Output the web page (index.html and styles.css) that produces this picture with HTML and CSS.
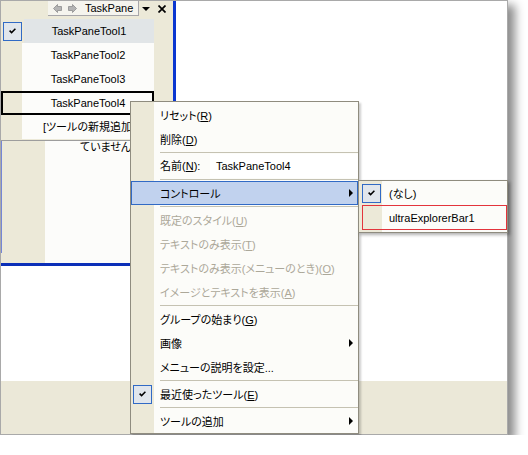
FILE: index.html
```html
<!DOCTYPE html>
<html lang="ja">
<head>
<meta charset="utf-8">
<title>TaskPane</title>
<link rel="stylesheet" href="styles.css">
</head>
<body>
<div class="window">
  <div class="main">
    <div class="panel">
      <div class="toolbar">
        <div class="tb-nav">
          <svg class="nav-arrow" width="9" height="9" viewBox="0 0 9 9"><polygon points="0.5,4.5 4.5,0.5 4.5,2.5 8.5,2.5 8.5,6.5 4.5,6.5 4.5,8.5" fill="#b4b4b4" stroke="#8e8e8e" stroke-width="0.8"/></svg>
          <svg class="nav-arrow second" width="9" height="9" viewBox="0 0 9 9"><polygon points="8.5,4.5 4.5,0.5 4.5,2.5 0.5,2.5 0.5,6.5 4.5,6.5 4.5,8.5" fill="#b4b4b4" stroke="#8e8e8e" stroke-width="0.8"/></svg>
          <span class="tb-title">TaskPane</span>
        </div>
        <div class="tb-drop"><span class="tri-down"></span></div>
        <div class="tb-close"><svg width="8" height="8" viewBox="0 0 8 8"><path d="M0.5 0.5 L7.5 7.5 M7.5 0.5 L0.5 7.5" stroke="#000" stroke-width="1.7"/></svg></div>
      </div>
      <div class="panel-body">
        <div class="list">
          <div class="row selected">
            <div class="gutter"><span class="cbox"><svg width="7" height="6" viewBox="0 0 7 6"><polyline points="0.6,2.6 2.6,4.6 6.4,0.8" fill="none" stroke="#000" stroke-width="1.5"/></svg></span></div>
            <div class="label">TaskPaneTool1</div>
          </div>
          <div class="row"><div class="gutter"></div><div class="label">TaskPaneTool2</div></div>
          <div class="row"><div class="gutter"></div><div class="label">TaskPaneTool3</div></div>
          <div class="row focused"><div class="gutter"></div><div class="label">TaskPaneTool4</div></div>
          <div class="row add"><div class="gutter"></div><div class="label">[ツールの新規追加</div></div>
          <div class="empty">
            <div class="egutter"><span class="bline"></span></div>
            <div class="etext">ていません。</div>
          </div>
        </div>
      </div>
    </div>
  </div>
  <div class="status"></div>

  <div class="menu">
    <div class="mi"><span class="ic"></span><span class="tx">リセット(<u>R</u>)</span></div>
    <div class="mi"><span class="ic"></span><span class="tx">削除(<u>D</u>)</span></div>
    <div class="sep"></div>
    <div class="mi name"><span class="ic"></span><span class="tx">名前(<u>N</u>):</span><span class="field">TaskPaneTool4</span></div>
    <div class="sep"></div>
    <div class="mi hot"><span class="ic"></span><span class="tx">コントロール</span><span class="arr"></span></div>
    <div class="sep"></div>
    <div class="mi dis"><span class="ic"></span><span class="tx">既定のスタイル(<u>U</u>)</span></div>
    <div class="mi dis"><span class="ic"></span><span class="tx">テキストのみ表示(<u>T</u>)</span></div>
    <div class="mi dis"><span class="ic"></span><span class="tx">テキストのみ表示(メニューのとき)(<u>O</u>)</span></div>
    <div class="mi dis"><span class="ic"></span><span class="tx">イメージとテキストを表示(<u>A</u>)</span></div>
    <div class="sep"></div>
    <div class="mi"><span class="ic"></span><span class="tx">グループの始まり(<u>G</u>)</span></div>
    <div class="mi"><span class="ic"></span><span class="tx">画像</span><span class="arr"></span></div>
    <div class="mi"><span class="ic"></span><span class="tx">メニューの説明を設定...</span></div>
    <div class="sep"></div>
    <div class="mi"><span class="ic"><span class="cbox"><svg width="7" height="6" viewBox="0 0 7 6"><polyline points="0.6,2.6 2.6,4.6 6.4,0.8" fill="none" stroke="#000" stroke-width="1.5"/></svg></span></span><span class="tx">最近使ったツール(<u>E</u>)</span></div>
    <div class="sep"></div>
    <div class="mi"><span class="ic"></span><span class="tx">ツールの追加</span><span class="arr"></span></div>
  </div>

  <div class="submenu">
    <div class="smi"><span class="sic"><span class="cbox"><svg width="7" height="6" viewBox="0 0 7 6"><polyline points="0.6,2.6 2.6,4.6 6.4,0.8" fill="none" stroke="#000" stroke-width="1.5"/></svg></span></span><span class="stx">(なし)</span></div>
    <div class="smi picked"><span class="sic"></span><span class="stx">ultraExplorerBar1</span></div>
  </div>
</div>
</body>
</html>
```

FILE: styles.css
```css
html, body {
  margin: 0;
  padding: 0;
  background: #ffffff;
}

body {
  font-family: "Liberation Sans", "Noto Sans CJK JP", sans-serif;
  font-size: 11px;
  font-feature-settings: "palt";
  color: #000;
}

u {
  text-decoration: underline;
  text-underline-offset: 1px;
}

.window {
  position: relative;
  width: 506px;
  height: 433px;
  border: 1px solid #a9a9a9;
  background: #ffffff;
  display: flex;
  flex-direction: column;
  box-shadow: 6px 6px 9px 1px rgba(0, 0, 0, 0.45);
}

.main {
  height: 380px;
  display: flex;
  align-items: flex-start;
}

.panel {
  width: 172px;
  height: 262px;
  background: #ece9d8;
  border-right: 3px solid #0a36d0;
  border-bottom: 3px solid #0b2fb8;
  display: flex;
  flex-direction: column;
}

/* toolbar */
.toolbar {
  height: 15px;
  display: flex;
  align-items: stretch;
}

.tb-nav {
  margin-left: 47px;
  width: 91px;
  background: #f5f4ee;
  border-right: 1px solid #a7a6aa;
  border-bottom: 1px solid #a7a6aa;
  display: flex;
  align-items: center;
  padding-left: 5px;
  box-sizing: border-box;
}

.nav-arrow.second {
  margin-left: 6px;
}

.tb-title {
  margin-left: 8px;
  line-height: 14px;
  white-space: nowrap;
}

.tb-drop {
  width: 13px;
  display: flex;
  align-items: center;
  justify-content: center;
}

.tri-down {
  width: 0;
  height: 0;
  border-top: 4px solid #000;
  border-left: 4px solid transparent;
  border-right: 4px solid transparent;
}

.tb-close {
  margin-left: 6px;
  display: flex;
  align-items: center;
}

/* list */
.panel-body {
  flex: 1;
  display: flex;
  padding-top: 3px;
}

.list {
  width: 153px;
  display: flex;
  flex-direction: column;
}

.row {
  height: 24px;
  display: flex;
  background: #fcfcfa;
}

.row .gutter {
  width: 21px;
  background: #ece9d8;
  display: flex;
  align-items: center;
}

.row .label {
  flex: 1;
  line-height: 24px;
  text-align: center;
  white-space: nowrap;
  overflow: hidden;
}

.row.selected .label {
  background: #e1e5e7;
}

.row.selected .gutter {
  padding-left: 2px;
}

.row.focused {
  outline: 2px solid #000;
  outline-offset: -2px;
}

.row.add .label {
  text-align: left;
  padding-left: 21px;
}

.cbox {
  width: 17px;
  height: 17px;
  border: 1px solid #316ac5;
  background: #e1e6ec;
  display: flex;
  align-items: center;
  justify-content: center;
}

.empty {
  margin-top: 1px;
  border-top: 1px solid #9d9d9d;
  flex: 1;
  display: flex;
}

.egutter {
  width: 44px;
  background: #ece9d8;
  display: flex;
  align-items: flex-start;
}

.bline {
  width: 1px;
  height: 112px;
  background: #7586d6;
}

.etext {
  flex: 1;
  background: #fcfcfa;
  padding-left: 35px;
  white-space: nowrap;
  line-height: 13px;
}

.status {
  height: 53px;
  background: #ebe8d8;
}

/* context menu */
.menu {
  position: absolute;
  left: 129px;
  top: 100px;
  width: 227px;
  padding-top: 1px;
  border: 1px solid #8f8c7f;
  background: linear-gradient(to right, #ece9d8 23px, #fcfcf9 23px);
  box-shadow: 2px 2px 2px rgba(0, 0, 0, 0.2);
}

.mi {
  height: 22px;
  border: 1px solid transparent;
  display: flex;
  align-items: center;
}

.mi .ic {
  width: 22px;
  height: 22px;
  display: flex;
  align-items: center;
}

.mi .ic .cbox {
  margin-left: 1px;
}

.mi .tx {
  flex: 1;
  padding-left: 6px;
  white-space: nowrap;
}

.mi.hot {
  background: #c1d2ee;
  border-color: #316ac5;
}

.mi.dis {
  color: #aca899;
}

.mi.name {
  height: 24px;
  border: 0;
  align-items: stretch;
}

.mi.name .ic {
  margin-left: 1px;
  height: 24px;
}

.mi.name .tx {
  flex: none;
  width: 50px;
  line-height: 24px;
}

.mi.name .field {
  flex: 1;
  background: #ffffff;
  padding-left: 6px;
  line-height: 24px;
  white-space: nowrap;
}

.arr {
  width: 0;
  height: 0;
  border-left: 4px solid #000;
  border-top: 4px solid transparent;
  border-bottom: 4px solid transparent;
  margin-right: 4px;
}

.sep {
  height: 1px;
  background: #c5c2b2;
  margin: 1px 0 1px 29px;
}

/* submenu */
.submenu {
  position: absolute;
  left: 357px;
  top: 179px;
  width: 148px;
  padding-bottom: 2px;
  border: 1px solid #8f8c7f;
  background: linear-gradient(to right, #ece9d8 23px, #fcfcf9 23px);
  box-shadow: 2px 2px 3px rgba(0, 0, 0, 0.3);
}

.smi {
  height: 24px;
  display: flex;
  align-items: center;
}

.smi .sic {
  width: 23px;
  display: flex;
  align-items: center;
}

.smi .sic .cbox {
  margin-left: 3px;
}

.smi .stx {
  padding-left: 7px;
  white-space: nowrap;
}

.smi.picked {
  height: 23px;
  margin-left: 3px;
  border: 1px solid #e3343c;
}

.smi.picked .sic {
  width: 19px;
}
```
